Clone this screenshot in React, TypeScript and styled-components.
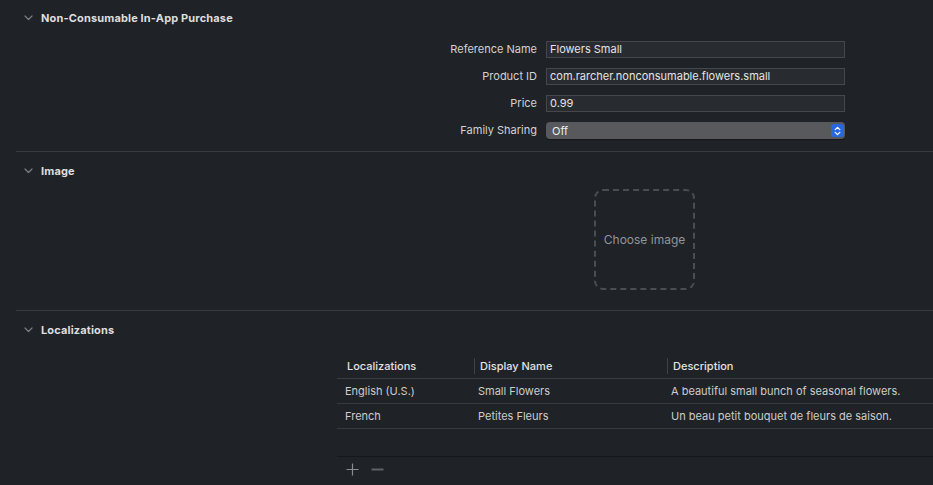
import React from 'react';
import styled, { createGlobalStyle } from 'styled-components';

const GlobalStyle = createGlobalStyle`
  html, body {
    margin: 0;
    padding: 0;
    background: #1f2226;
  }
  body {
    font-family: Inter, 'Liberation Sans', sans-serif;
    -webkit-font-smoothing: antialiased;
  }
`;

const Page = styled.div`
  width: 933px;
  height: 485px;
  overflow: hidden;
  background: #1f2226;
  color: #dcdcdc;
`;

const Section = styled.section<{ padBottom: number }>`
  padding-bottom: ${p => p.padBottom}px;
`;

const Separator = styled.div`
  height: 1px;
  margin-left: 16px;
  background: #383b3f;
`;

const Header = styled.div<{ tall?: boolean }>`
  display: flex;
  align-items: center;
  gap: 8px;
  height: ${p => (p.tall ? 37 : 36)}px;
  padding-left: 24px;
`;

const Title = styled.h2`
  margin: 0;
  font-size: 11px;
  font-weight: 700;
  color: #dedede;
  letter-spacing: 0.15px;
`;

const FormGrid = styled.div`
  display: grid;
  grid-template-columns: 537px 299px;
  column-gap: 9px;
  row-gap: 10px;
  padding-top: 5px;
`;

const Label = styled.label`
  text-align: right;
  font-size: 11px;
  line-height: 17px;
  color: #d2d2d2;
`;

const TextField = styled.div`
  height: 17px;
  box-sizing: border-box;
  border: 1px solid #44474b;
  background: #282b2f;
  padding-left: 3px;
  font-size: 11px;
  line-height: 15px;
  color: #e4e4e4;
`;

const Popup = styled.div`
  height: 17px;
  box-sizing: border-box;
  border-radius: 4px;
  background: #57595d;
  display: flex;
  align-items: center;
  justify-content: space-between;
  padding: 0 1px 0 6px;
  font-size: 11px;
  color: #ececec;
  box-shadow: 0 1px 1px rgba(0, 0, 0, 0.35);
`;

const Stepper = styled.div`
  width: 13px;
  height: 13px;
  border-radius: 3px;
  background: #2767e0;
  display: flex;
  align-items: center;
  justify-content: center;
`;

const ImageArea = styled.div`
  display: flex;
  padding-left: 594px;
`;

const DropBox = styled.div`
  width: 101px;
  height: 101px;
  box-sizing: border-box;
  border: 2px dashed #4a4d51;
  border-radius: 9px;
  display: flex;
  align-items: center;
  justify-content: center;
  font-size: 12px;
  color: #92959a;
`;

const TableWrap = styled.div`
  margin-left: 337px;
  margin-top: 5px;
`;

const Table = styled.div`
  display: grid;
  grid-template-columns: 137px 193px 1fr;
`;

const HeadCell = styled.div<{ divider?: boolean; pad: number }>`
  position: relative;
  height: 25px;
  display: flex;
  align-items: center;
  padding-left: ${p => p.pad}px;
  font-size: 11px;
  font-weight: 500;
  color: #e2e2e2;
  border-bottom: 1px solid #3a3d41;

  &::before {
    content: '';
    display: ${p => (p.divider ? 'block' : 'none')};
    position: absolute;
    left: 0;
    top: 5px;
    width: 1px;
    height: 16px;
    background: #3f4246;
  }
`;

const Cell = styled.div<{ pad: number }>`
  height: 24px;
  display: flex;
  align-items: center;
  padding-left: ${p => p.pad}px;
  font-size: 11px;
  color: #cdcdcd;
  border-bottom: 1px solid #36393d;
  white-space: nowrap;
`;

const BottomBar = styled.div`
  margin-top: 27px;
  border-top: 1px solid #15171a;
  display: flex;
  align-items: center;
  gap: 11px;
  height: 24px;
  padding-left: 8px;
`;

const IconButton = styled.button`
  border: none;
  background: transparent;
  padding: 0;
  width: 14px;
  height: 14px;
  display: flex;
  align-items: center;
  justify-content: center;
  cursor: pointer;
`;

const Chevron = () => (
  <svg width="9" height="6" viewBox="0 0 9 6">
    <path d="M1 1 L4.5 4.5 L8 1" fill="none" stroke="#7c7f84" strokeWidth="1.2" strokeLinecap="round" strokeLinejoin="round" />
  </svg>
);

const StepperIcon = () => (
  <svg width="7" height="10" viewBox="0 0 7 10">
    <path d="M1.2 3.6 L3.5 1.4 L5.8 3.6 M1.2 6.4 L3.5 8.6 L5.8 6.4" fill="none" stroke="#ffffff" strokeWidth="1.3" strokeLinecap="round" strokeLinejoin="round" />
  </svg>
);

const fields = [
  { label: 'Reference Name', value: 'Flowers Small' },
  { label: 'Product ID', value: 'com.rarcher.nonconsumable.flowers.small' },
  { label: 'Price', value: '0.99' },
];

const localizations = [
  { lang: 'English (U.S.)', name: 'Small Flowers', desc: 'A beautiful small bunch of seasonal flowers.' },
  { lang: 'French', name: 'Petites Fleurs', desc: 'Un beau petit bouquet de fleurs de saison.' },
];

const App: React.FC = () => {
  return (
    <Page>
      <GlobalStyle />
      <Section padBottom={12}>
        <Header>
          <Chevron />
          <Title>Non-Consumable In-App Purchase</Title>
        </Header>
        <FormGrid>
          {fields.map(f => (
            <React.Fragment key={f.label}>
              <Label>{f.label}</Label>
              <TextField>{f.value}</TextField>
            </React.Fragment>
          ))}
          <Label>Family Sharing</Label>
          <Popup>
            Off
            <Stepper>
              <StepperIcon />
            </Stepper>
          </Popup>
        </FormGrid>
      </Section>
      <Separator />
      <Section padBottom={20}>
        <Header tall>
          <Chevron />
          <Title>Image</Title>
        </Header>
        <ImageArea>
          <DropBox>Choose image</DropBox>
        </ImageArea>
      </Section>
      <Separator />
      <Section padBottom={0}>
        <Header tall>
          <Chevron />
          <Title>Localizations</Title>
        </Header>
        <TableWrap>
          <Table>
            <HeadCell pad={10}>Localizations</HeadCell>
            <HeadCell pad={6} divider>Display Name</HeadCell>
            <HeadCell pad={6} divider>Description</HeadCell>
            {localizations.map(l => (
              <React.Fragment key={l.lang}>
                <Cell pad={8}>{l.lang}</Cell>
                <Cell pad={4}>{l.name}</Cell>
                <Cell pad={4}>{l.desc}</Cell>
              </React.Fragment>
            ))}
          </Table>
          <BottomBar>
            <IconButton aria-label="Add">
              <svg width="13" height="13" viewBox="0 0 13 13">
                <path d="M6.5 0.5 V12.5 M0.5 6.5 H12.5" stroke="#8a8c90" strokeWidth="1.2" />
              </svg>
            </IconButton>
            <IconButton aria-label="Remove">
              <svg width="13" height="13" viewBox="0 0 13 13">
                <path d="M0.5 6.5 H12.5" stroke="#5f6266" strokeWidth="2" />
              </svg>
            </IconButton>
          </BottomBar>
        </TableWrap>
      </Section>
    </Page>
  );
};

export default App;
